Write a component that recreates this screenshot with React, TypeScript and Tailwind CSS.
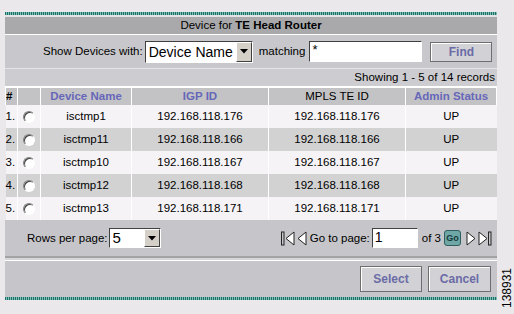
import React from 'react';

const rows = [
  { n: 1, name: 'isctmp1', igp: '192.168.118.176', te: '192.168.118.176', status: 'UP' },
  { n: 2, name: 'isctmp11', igp: '192.168.118.166', te: '192.168.118.166', status: 'UP' },
  { n: 3, name: 'isctmp10', igp: '192.168.118.167', te: '192.168.118.167', status: 'UP' },
  { n: 4, name: 'isctmp12', igp: '192.168.118.168', te: '192.168.118.168', status: 'UP' },
  { n: 5, name: 'isctmp13', igp: '192.168.118.171', te: '192.168.118.171', status: 'UP' },
];

const TealRule = () => (
  <div className="h-[3px] bg-[repeating-linear-gradient(90deg,#1d6f6a_0_1px,#7fbdb5_1px_2px)]" />
);

const Arrow = () => (
  <span className="flex h-full w-[16px] shrink-0 items-center justify-center border-l border-t border-l-white border-t-white border-r border-b border-r-[#404040] border-b-[#404040] bg-[#d4d0c8]">
    <svg width="8" height="5" viewBox="0 0 8 5"><path d="M0 0h8L4 4.5z" fill="#000" /></svg>
  </span>
);

const Radio = () => (
  <span className="block h-[12px] w-[12px] rounded-full border border-t-[#808080] border-l-[#808080] border-r-white border-b-white bg-white shadow-[inset_1px_1px_0_#404040]" />
);

const Tri = ({ dir, bar }: { dir: 'l' | 'r'; bar?: boolean }) => (
  <svg width={bar ? 14 : 10} height="15" viewBox={bar ? '0 0 14 15' : '0 0 10 15'} className="shrink-0">
    {dir === 'l' ? (
      <>
        {bar && <rect x="0.5" y="1" width="2.5" height="13" fill="none" stroke="#222" strokeWidth="1" />}
        <path d={bar ? 'M13 1L5 7.5 13 14z' : 'M9 1L1 7.5 9 14z'} fill="#fff" stroke="#222" strokeWidth="1" />
      </>
    ) : (
      <>
        <path d="M1 1L9 7.5 1 14z" fill="#fff" stroke="#222" strokeWidth="1" />
        {bar && <rect x="10.5" y="1" width="2.5" height="13" fill="none" stroke="#222" strokeWidth="1" />}
      </>
    )}
  </svg>
);

const Btn = ({ label, className }: { label: string; className: string }) => (
  <button className={`shrink-0 border border-[#6e6e6e] bg-[#d2d2d6] shadow-[inset_1px_1px_0_#fff] text-[12px] font-bold text-[#6b6ba6] ${className}`}>
    {label}
  </button>
);

export default function App() {
  return (
    <div className="relative h-[314px] w-[514px] overflow-hidden whitespace-nowrap bg-[#ebe8eb] font-['Liberation_Sans',Arial,sans-serif] text-[11.5px] text-black">
      <div className="ml-[5px] mt-[12px] w-[492px]">
        <TealRule />
        <div className="h-[2px] bg-[#e4e4e6]" />
        <div className="flex h-[17px] items-center justify-center bg-[#a9a9ab]">
          Device for&nbsp;<b>TE Head Router</b>
        </div>
        <div className="h-px bg-white" />
        <div className="flex h-[33px] items-center bg-[#c8c8cc] pl-[38px]">
          <span className="shrink-0">Show Devices with:</span>
          <span className="ml-[2px] flex h-[22px] w-[108px] shrink-0 items-stretch border border-t-[#404040] border-l-[#404040] border-r-white border-b-white bg-white">
            <span className="flex-1 pl-[3px] text-[14px] leading-[20px]">Device Name</span>
            <Arrow />
          </span>
          <span className="ml-[6px] shrink-0">matching</span>
          <span className="ml-[4px] h-[21px] w-[113px] shrink-0 border border-t-[#404040] border-l-[#404040] border-r-white border-b-white bg-white pl-[2px] text-[13px] leading-[16px]">*</span>
          <Btn label="Find" className="ml-[8px] h-[20px] w-[62px]" />
        </div>
        <div className="h-px bg-[#e4e4e6]" />
        <div className="flex h-[17px] items-center justify-end bg-[#cdcdd1] pr-[2px]">
          Showing 1 - 5 of 14 records
        </div>
        <table className="w-full table-fixed border-collapse text-center">
          <colgroup>
            <col className="w-[12px]" />
            <col className="w-[23px]" />
            <col className="w-[91px]" />
            <col className="w-[137px]" />
            <col className="w-[137px]" />
            <col />
          </colgroup>
          <thead>
            <tr className="h-[18px] bg-[#c3c3c5]">
              <th className="border-x border-t-2 border-white text-left font-bold">#</th>
              <th className="border-x border-t-2 border-white" />
              <th className="border-x border-t-2 border-white font-bold text-[#6767b9]">Device Name</th>
              <th className="border-x border-t-2 border-white font-bold text-[#6767b9]">IGP ID</th>
              <th className="border-x border-t-2 border-white font-normal">MPLS TE ID</th>
              <th className="border-x border-t-2 border-white font-bold text-[#6767b9]">Admin Status</th>
            </tr>
          </thead>
          <tbody>
            {rows.map((r, i) => (
              <tr key={r.n} className={`h-[23px] ${i % 2 ? 'bg-[#d2d2d3]' : 'bg-[#f5f3f5]'}`}>
                <td className="border-r border-white text-left">{r.n}.</td>
                <td className="border-r border-white">
                  <div className="flex justify-center"><Radio /></div>
                </td>
                <td className="border-r border-white">{r.name}</td>
                <td className="border-r border-white">{r.igp}</td>
                <td className="border-r border-white">{r.te}</td>
                <td>{r.status}</td>
              </tr>
            ))}
          </tbody>
        </table>
        <div className="flex h-[36px] items-start bg-[#c6c6ca] pt-[8px]">
          <span className="ml-[22px] mt-[2px] shrink-0">Rows per page:</span>
          <span className="ml-[1px] flex h-[20px] w-[52px] shrink-0 items-stretch border border-t-[#404040] border-l-[#404040] border-r-white border-b-white bg-white">
            <span className="flex-1 pl-[3px] text-[15px] leading-[18px]">5</span>
            <Arrow />
          </span>
          <div className="ml-auto mr-[5px] flex items-center gap-[2px]">
            <Tri dir="l" bar />
            <Tri dir="l" />
            <span className="ml-[1px]">Go to page:</span>
            <span className="h-[20px] w-[46px] border border-t-[#404040] border-l-[#404040] border-r-white border-b-white bg-white pl-[2px] text-[14px] leading-[17px]">1</span>
            <span className="ml-[2px]">of 3</span>
            <span className="ml-[1px] flex h-[16px] w-[17px] items-center justify-center rounded-[3px] border border-[#2f5f60] bg-[#6fa6a6] text-[9px] font-bold text-[#163b3c]">Go</span>
            <span className="ml-[3px] flex gap-[2px]"><Tri dir="r" /><Tri dir="r" bar /></span>
          </div>
        </div>
        <div className="h-[2px] bg-[#a3a3a5]" />
        <div className="h-[2px] bg-[#d6d6d8]" />
        <div className="h-px bg-white" />
        <div className="flex h-[36px] items-center justify-end gap-[6px] bg-[#c6c6ca] pr-[6px]">
          <Btn label="Select" className="h-[26px] w-[62px]" />
          <Btn label="Cancel" className="h-[26px] w-[63px]" />
        </div>
        <TealRule />
      </div>
      <div className="absolute left-[500px] top-[264px] flex h-[48px] w-[14px] items-center justify-center">
        <span className="-rotate-90 text-[12px]">138931</span>
      </div>
    </div>
  );
}
